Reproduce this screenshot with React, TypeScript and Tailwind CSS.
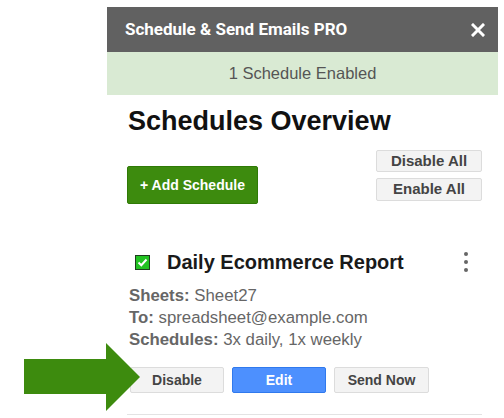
import React from "react";

const arial = { fontFamily: '"Liberation Sans", Arial, sans-serif' };

function GrayButton({ children, className = "" }: { children: React.ReactNode; className?: string }) {
  return (
    <button
      className={`bg-[#f3f3f3] border border-[#dcdcdc] rounded-[2px] text-[#444] font-bold flex items-center justify-center ${className}`}
    >
      {children}
    </button>
  );
}

export default function App() {
  return (
    <div className="relative w-[504px] h-[418px] overflow-hidden bg-white" style={arial}>
      <div className="ml-[107px] mt-[7px] w-[391px]">
        {/* header */}
        <div className="h-[45px] bg-[#616161] flex items-center justify-between pl-[18px] pr-[13px]">
          <span className="text-white font-bold text-[17px]" style={{ fontFamily: "Roboto, sans-serif" }}>
            Schedule &amp; Send Emails PRO
          </span>
          <svg width="14" height="14" viewBox="0 0 14 14">
            <path d="M2 2 L12 12 M12 2 L2 12" stroke="white" strokeWidth="3" strokeLinecap="square" />
          </svg>
        </div>
        <div className="h-[43px] bg-[#d9ead3] flex items-center justify-center text-[#555] text-[16.5px]">
          1 Schedule Enabled
        </div>

        <div className="pl-[20px] pr-[16px]">
          <h1 className="text-[27px] font-bold text-[#111] pt-[10px] leading-[32px] pl-px">Schedules Overview</h1>

          <div className="flex justify-between mt-[13px]">
            <button className="mt-[16px] w-[131px] h-[38px] bg-[#3d8b0e] border border-[#2f7a06] rounded-[2px] text-white font-bold text-[14px]">
              + Add Schedule
            </button>
            <div className="flex flex-col gap-[6px]">
              <GrayButton className="w-[106px] h-[22px] text-[15px]">Disable All</GrayButton>
              <GrayButton className="w-[106px] h-[23px] text-[15px]">Enable All</GrayButton>
            </div>
          </div>

          {/* card */}
          <div className="mt-[46px] pl-[3px]">
            <div className="flex items-center justify-between h-[24px]">
              <div className="flex items-center">
                <div className="ml-[5px] w-[15px] h-[15px] bg-[#22c322] border border-[#1f3d1f] flex items-center justify-center">
                  <svg width="11" height="9" viewBox="0 0 11 9">
                    <path d="M1.5 4.5 L4.3 7.2 L9.5 1.5" stroke="white" strokeWidth="2" fill="none" />
                  </svg>
                </div>
                <span className="ml-[17px] text-[20px] font-bold text-[#1a1a1a]">Daily Ecommerce Report</span>
              </div>
              <div className="flex flex-col gap-[4px] mr-[14px]">
                <span className="w-[4px] h-[4px] rounded-full bg-[#666]" />
                <span className="w-[4px] h-[4px] rounded-full bg-[#666]" />
                <span className="w-[4px] h-[4px] rounded-full bg-[#666]" />
              </div>
            </div>

            <div className="mt-[11px] -ml-px text-[16.8px] leading-[22px] text-[#666]">
              <div>
                <b>Sheets:</b> Sheet27
              </div>
              <div>
                <b>To:</b> spreadsheet@example.com
              </div>
              <div>
                <b>Schedules:</b> 3x daily, 1x weekly
              </div>
            </div>

            <div className="flex gap-[8px] mt-[16px]">
              <GrayButton className="w-[94px] h-[26px] text-[14px]">Disable</GrayButton>
              <button className="w-[94px] h-[26px] bg-[#4d90fe] border border-[#3079ed] rounded-[2px] text-white font-bold text-[14px]">
                Edit
              </button>
              <GrayButton className="w-[95px] h-[26px] text-[14px]">Send Now</GrayButton>
            </div>
          </div>

          <div className="mt-[21px] h-px bg-[#e3e3e3]" />
        </div>
      </div>

      {/* arrow pointer */}
      <svg className="absolute left-0 top-0" width="150" height="418" viewBox="0 0 150 418">
        <polygon points="24,359 106,359 106,343 140,377 106,411 106,394 24,394" fill="#3d8b0e" />
      </svg>
    </div>
  );
}
